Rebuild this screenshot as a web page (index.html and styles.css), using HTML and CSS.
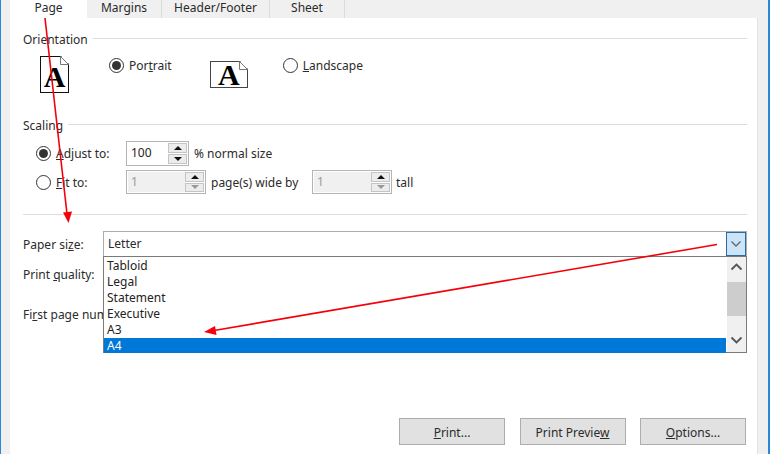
FILE: index.html
```html
<!DOCTYPE html>
<html lang="en">
<head>
<meta charset="utf-8">
<title>Page Setup</title>
<link rel="stylesheet" href="styles.css">
</head>
<body>
<div class="window">
  <div class="tabs">
    <div class="tab active">Page</div>
    <div class="tab t2">Margins</div>
    <div class="tab t3">Header/Footer</div>
    <div class="tab t4">Sheet</div>
  </div>
  <div class="panel">
    <div class="legend orient-legend"><span>Orientation</span><i></i></div>
    <div class="orient">
      <div class="doc portrait"><span>A</span><svg class="fold" width="9" height="9" viewBox="0 0 9 9"><path d="M0.5 0.5 L8.5 8.5 L0.5 8.5 Z" fill="#fff" stroke="#777"/><path d="M1 0 L9 0 L9 8 Z" fill="#fff"/></svg></div>
      <div class="radio on r-portrait"></div>
      <div class="lbl">Por<u>t</u>rait</div>
      <div class="doc landscape"><span>A</span><svg class="fold" width="9" height="9" viewBox="0 0 9 9"><path d="M0.5 0.5 L8.5 8.5 L0.5 8.5 Z" fill="#fff" stroke="#777"/><path d="M1 0 L9 0 L9 8 Z" fill="#fff"/></svg></div>
      <div class="radio r-land"></div>
      <div class="lbl"><u>L</u>andscape</div>
    </div>
    <div class="legend scale-legend"><span>Scaling</span><i></i></div>
    <div class="scale-row first">
      <div class="radio on"></div>
      <div class="lbl wide"><u>A</u>djust to:</div>
      <div class="spin s100">
        <div class="val">100</div>
        <div class="btns"><b class="up"></b><b class="down"></b></div>
      </div>
      <div class="lbl after">% normal size</div>
    </div>
    <div class="scale-row second">
      <div class="radio"></div>
      <div class="lbl wide"><u>F</u>it to:</div>
      <div class="spin off">
        <div class="val">1</div>
        <div class="btns"><b class="up"></b><b class="down"></b></div>
      </div>
      <div class="lbl after pages">page(s) wide by</div>
      <div class="spin off">
        <div class="val">1</div>
        <div class="btns"><b class="up"></b><b class="down"></b></div>
      </div>
      <div class="lbl tall">tall</div>
    </div>
    <div class="divider"></div>
    <div class="field paper">
      <div class="flabel">Paper si<u>z</u>e:</div>
      <div class="combo">
        <div class="combo-val">Letter</div>
        <div class="combo-btn"><svg width="12" height="8" viewBox="0 0 12 8"><path d="M1.500 1.500 L6 6 L10.500 1.500" fill="none" stroke="#5f6b75" stroke-width="1.4"/></svg></div>
        <div class="list">
          <div class="items">
            <div class="item">Tabloid</div>
            <div class="item">Legal</div>
            <div class="item">Statement</div>
            <div class="item">Executive</div>
            <div class="item">A3</div>
            <div class="item sel">A4</div>
          </div>
          <div class="scroll">
            <div class="sb-btn"><svg width="13" height="8" viewBox="0 0 13 8"><path d="M1.500 6.500 L6.500 1.500 L11.500 6.500" fill="none" stroke="#555" stroke-width="1.8"/></svg></div>
            <div class="thumb"></div>
            <div class="sb-btn end"><svg width="13" height="8" viewBox="0 0 13 8"><path d="M1.500 1.500 L6.500 6.500 L11.500 1.500" fill="none" stroke="#555" stroke-width="1.8"/></svg></div>
          </div>
        </div>
      </div>
    </div>
    <div class="field quality"><div class="flabel">Print <u>q</u>uality:</div></div>
    <div class="field firstpage"><div class="flabel">Fi<u>r</u>st page num</div></div>
    <div class="actions">
      <div class="btn"><u>P</u>rint...</div>
      <div class="btn">Print Previe<u>w</u></div>
      <div class="btn"><u>O</u>ptions...</div>
    </div>
  </div>
  <svg class="arrows" width="770" height="454" viewBox="0 0 770 454">
    <path d="M45 18 L67 214" fill="none" stroke="#f5000a" stroke-width="1.6"/>
    <path d="M68.500 223 L63 212.500 L72 211.500 Z" fill="#f5000a"/>
    <path d="M717 244.500 L214 330.500" fill="none" stroke="#f5000a" stroke-width="1.6"/>
    <path d="M204 332 L215 326 L216.500 335 Z" fill="#f5000a"/>
  </svg>
</div>
</body>
</html>
```
FILE: styles.css
```css
* { box-sizing: border-box; }
html, body { margin: 0; padding: 0; }
body {
  width: 770px;
  height: 454px;
  overflow: hidden;
  font-family: "Noto Sans", "Open Sans", sans-serif;
  font-size: 12px;
  color: #2b2b2b;
}
.window {
  position: relative;
  width: 770px;
  height: 454px;
  padding: 0;
  background: #f0f0f0;
  border-left: 1px solid #2b88d8;
  border-right: 2px solid #2b88d8;
  display: flex;
  flex-direction: column;
}
.tabs {
  display: flex;
  height: 18px;
  margin-left: 9px;
  flex: none;
}
.tab {
  height: 18px;
  line-height: 15px;
  text-align: center;
  border-right: 1px solid #dcdcdc;
  background: #f0f0f0;
}
.tab.active { width: 77px; background: #fff; border: 0; }
.t2 { width: 75px; }
.t3 { width: 108px; }
.t4 { width: 75px; }
.panel {
  width: 748px;
  height: 436px;
  margin-left: 9px;
  background: #fff;
  border-right: 1px solid #e3e3e3;
  padding: 0 10px 0 13px;
  display: flex;
  flex-direction: column;
}
.legend {
  display: flex;
  align-items: center;
  height: 16px;
  gap: 5px;
}
.legend span { flex: none; }
.legend i { flex: 1; height: 1px; background: #dcdcdc; margin-top: -2px; }
.orient-legend { margin-top: 13px; }
.orient {
  position: relative;
  display: flex;
  align-items: flex-start;
  height: 62px;
  flex: none;
}
.doc {
  position: relative;
  flex: none;
  background: #fff;
  border: 1px solid #111;
  display: flex;
  align-items: center;
  justify-content: center;
  font-family: "Liberation Serif", serif;
  font-weight: 700;
  color: #000;
}
.doc span { display: block; }
.fold { position: absolute; top: -1px; right: -1px; }
.portrait { width: 29px; height: 37px; margin: 9px 0 0 17px; font-size: 30px; line-height: 30px; padding-top: 5px; }
.landscape { width: 38px; height: 27px; margin: 14px 0 0 38px; border-color: #444; font-size: 30px; line-height: 26px; }
.radio {
  flex: none;
  position: relative;
  width: 15px;
  height: 15px;
  border-radius: 50%;
  border: 1px solid #333;
  background: #fff;
}
.radio.on::after {
  content: "";
  position: absolute;
  left: 2px;
  top: 2px;
  width: 9px;
  height: 9px;
  border-radius: 50%;
  background: #333;
}
.r-portrait { margin: 11px 5px 0 40px; }
.r-land { margin: 11px 5px 0 35px; }
.orient .lbl { margin-top: 10px; line-height: 17px; }
.scale-legend { margin-top: 8px; }
.scale-row {
  display: flex;
  align-items: center;
  flex: none;
  padding-left: 13px;
}
.scale-row.first { height: 25px; margin-top: 8px; }
.scale-row.second { height: 24px; margin-top: 4px; }
.scale-row .radio { margin-right: 5px; }
.lbl.wide { width: 70px; }
.spin {
  display: flex;
  flex: none;
  height: 100%;
  width: 80px;
  border: 1px solid #b4b4b4;
  background: #fff;
}
.s100 { width: 63px; }
.val { flex: 1; padding-left: 4px; line-height: 21px; color: #222; }
.btns {
  flex: none;
  width: 20px;
  display: flex;
  flex-direction: column;
  gap: 1px;
  background: #fff;
  padding: 1px 1px 1px 0;
}
.btns b {
  flex: 1;
  display: flex;
  align-items: center;
  justify-content: center;
  background: #ececec;
  border: 1px solid #c4c4c4;
}
.btns b::after {
  content: "";
  border-left: 4px solid transparent;
  border-right: 4px solid transparent;
}
.up::after { border-bottom: 4px solid #111; }
.down::after { border-top: 4px solid #111; }
.off .val { background: #f0f0f0; color: #9a9a9a; margin: 1px 0 1px 1px; line-height: 19px; padding-left: 3px; }
.off .down::after { border-top-color: #999; }
.after { margin-left: 5px; }
.pages { width: 101px; }
.tall { margin-left: 4px; }
.divider { height: 1px; background: #dcdcdc; margin-top: 20px; flex: none; }
.field { display: flex; flex: none; }
.flabel { width: 80px; white-space: nowrap; line-height: 17px; flex: none; }
.paper { height: 26px; margin-top: 16px; align-items: center; }
.combo {
  position: relative;
  flex: 1;
  height: 26px;
  border: 1px solid #adadad;
  display: flex;
  background: #fff;
}
.combo-val { flex: 1; padding-left: 4px; line-height: 23px; }
.combo-btn {
  width: 20px;
  height: 24px;
  flex: none;
  background: #cce4f7;
  border: 1px solid #2d6a9f;
  display: flex;
  align-items: center;
  justify-content: center;
}
.list {
  position: absolute;
  left: -1px;
  right: -1px;
  top: 24px;
  height: 97px;
  display: flex;
  background: #fff;
  border: 1px solid #7a7a7a;
  z-index: 2;
}
.items { flex: 1; }
.item { height: 16px; line-height: 18px; padding-left: 3px; color: #222; }
.sel { background: #0078d7; color: #fff; height: 15px; line-height: 15px; margin-top: 1px; }
.scroll { flex: none; width: 19px; margin-left: 1px; background: #f0f0f0; display: flex; flex-direction: column; }
.sb-btn { flex: none; height: 20px; display: flex; align-items: center; justify-content: center; }
.thumb { flex: none; height: 34px; margin-top: 5px; background: #cdcdcd; }
.sb-btn.end { margin-top: auto; padding-bottom: 5px; }
.quality { margin-top: 9px; }
.firstpage { margin-top: 23px; }
.actions {
  display: flex;
  justify-content: flex-end;
  gap: 14.5px;
  margin-top: 95px;
  padding-right: 1px;
}
.btn {
  width: 106px;
  height: 27px;
  background: #e1e1e1;
  border: 1px solid #adadad;
  text-align: center;
  line-height: 27px;
}
.arrows { position: absolute; left: -1px; top: 0; z-index: 5; pointer-events: none; }
```
